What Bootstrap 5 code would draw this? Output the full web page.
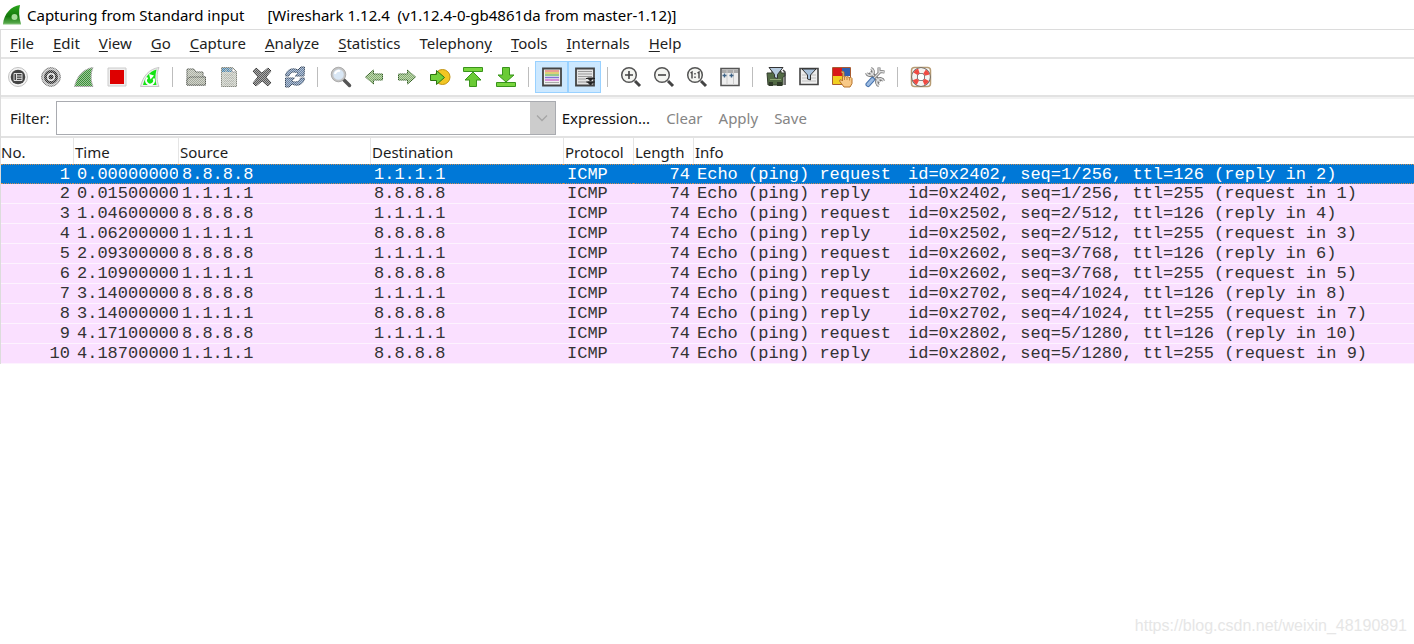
<!DOCTYPE html>
<html lang="en">
<head>
<meta charset="utf-8">
<meta name="viewport" content="width=device-width, initial-scale=1">
<title>Capturing from Standard input</title>
<link href="https://cdn.jsdelivr.net/npm/bootstrap@5.3.0/dist/css/bootstrap.min.css" rel="stylesheet">
<style>
body{font-family:"Noto Sans","Open Sans",sans-serif;font-size:15px;line-height:20px;color:#1c1c1c;background:#fff}
.titlebar{height:29px;padding-left:2px;gap:5px;color:#000;white-space:pre}
.appname{margin-left:18px}
.frame-left{border-left:1px solid #dcdcdc;border-top:1px solid #dcdcdc}
.menubar{height:29px;padding:0 0 2px 9px;gap:19px;border-bottom:2px solid #e4e4e4}
.menubar a{color:#222;text-decoration:none}
.menubar u,.menubar a{text-underline-offset:2px}
.toolbar{height:38px;border-bottom:2px solid #e2e2e2}
.tool{width:33px;height:32px;padding:0;border:1px solid transparent;border-radius:0;line-height:0}
.tool.on{background:#cce8ff;border-color:#99d1ff}
.tool svg{width:22px;height:22px}
.tool:disabled{border-color:transparent;opacity:1}
.tool:disabled svg{-webkit-mask:repeating-conic-gradient(#000 0 25%,rgba(0,0,0,.5) 0 50%) 0 0/2px 2px;mask:repeating-conic-gradient(#000 0 25%,rgba(0,0,0,.5) 0 50%) 0 0/2px 2px}
.divider{width:1px;height:20px;margin:0 6px;background:#bdbdbd}
.filterbar{height:41px;padding-left:9px;border-top:2px solid #f2f2f2;border-bottom:2px solid #e2e2e2}
.combo{width:500px;height:34px;margin:0 6px;border:1px solid #a9abb0}
.combo input{min-width:0;border:0;outline:0;padding:0 6px;background:#fff}
.combo button{width:25px;border:0;background:#ccc;padding:0;line-height:0}
.filterbar .act{padding:0;border:0;margin-right:16px;font-size:15px;line-height:20px;color:#111}
.filterbar .act:disabled{color:#858585;opacity:1;border:0}
.packets{table-layout:fixed;width:100%;border-collapse:separate;border-spacing:0}
.packets th{height:26px;padding:0 0 2px 1px;font-weight:400;line-height:20px;border-left:1px solid #e5e5e5;white-space:nowrap;vertical-align:bottom}
.packets th:first-child{border-left:0;padding-left:0}
.packets td{height:20px;padding:0 0 0 4px;font-family:"Liberation Mono",monospace;font-size:17px;line-height:18px;white-space:pre;overflow:hidden;background:#fae0ff;color:#333;border-bottom:1px solid #fdf3ff}
.packets td.num{text-align:right;padding:0 3px 0 0}
.packets .picked td{background:#0078d7;color:#fff;border-top:1px dotted #c98d55;border-bottom:1px dotted #c98d55;line-height:17px}
.what{display:inline-block;min-width:211px}
.watermark{position:absolute;right:7px;bottom:8px;font-family:"Liberation Sans",sans-serif;font-size:16px;color:#e6e6e6}
</style>
</head>
<body class="position-relative min-vh-100 overflow-hidden">
<header class="titlebar d-flex align-items-center">
<svg width="20" height="20" viewBox="0 0 20 20"><defs><linearGradient id="fin" x1="0" y1="0" x2="0" y2="1"><stop offset="0" stop-color="#2aa51c"/><stop offset=".6" stop-color="#14790c"/><stop offset="1" stop-color="#5fae52"/></linearGradient></defs><path d="M1 19C2 9 9 1 18 0c-1.500 6-1 12 1 19z" fill="url(#fin)"/><circle cx="12.500" cy="12" r="3" fill="#a5dc9a"/><path d="M1 19h18" stroke="#7fbf75"/></svg>
<span>Capturing from Standard input</span><span class="appname">[Wireshark 1.12.4  (v1.12.4-0-gb4861da from master-1.12)]</span>
</header>
<div class="frame-left">
<nav class="menubar d-flex align-items-center" aria-label="Main">
<a href="#"><u>F</u>ile</a><a href="#"><u>E</u>dit</a><a href="#"><u>V</u>iew</a><a href="#"><u>G</u>o</a><a href="#"><u>C</u>apture</a><a href="#"><u>A</u>nalyze</a><a href="#"><u>S</u>tatistics</a><a href="#">Telephon<u>y</u></a><a href="#"><u>T</u>ools</a><a href="#"><u>I</u>nternals</a><a href="#"><u>H</u>elp</a>
</nav>
<div class="toolbar d-flex align-items-center" role="toolbar" aria-label="Tools">
<button class="btn tool" aria-label="Interfaces"><svg viewBox="0 0 22 22"><circle cx="11" cy="11" r="9.500" fill="#f4f4f4" stroke="#c2c2c2"/><circle cx="11" cy="11" r="7.300" fill="#444"/><path d="M7 7.500h8v7H7zM9.500 7.500v7M9.500 10H15M9.500 12.300H15" fill="none" stroke="#ddd"/></svg></button>
<button class="btn tool" aria-label="Options" disabled><svg viewBox="0 0 22 22"><circle cx="11" cy="11" r="9.300" fill="#bdbdbd" stroke="#666"/><circle cx="11" cy="11" r="5.500" fill="#eee" stroke="#333" stroke-width="3"/><circle cx="11" cy="11" r="2.500" fill="#222"/></svg></button>
<button class="btn tool" aria-label="Start" disabled><svg viewBox="0 0 22 22"><path d="M1.500 20.500C4 10 10 3 20 1.500c-2.500 6-2.500 13 0 19z" fill="#3c8f37" stroke="#999"/></svg></button>
<button class="btn tool" aria-label="Stop"><svg viewBox="0 0 22 22"><path d="M2 2h18v18H2z" fill="#eee" stroke="#ccc"/><path d="M4 4h14v14H4z" fill="#de0000"/></svg></button>
<button class="btn tool" aria-label="Restart"><svg viewBox="0 0 22 22"><path d="M1.500 20.500C4 10 10 3 20 1.500c-2.500 6-2.500 13 0 19z" fill="#eee" stroke="#c7c7c7"/><path d="M4 19C6 11 10 6 17.500 3.500c-1.500 6-1.500 10 0 15.500z" fill="#15e415"/><path d="M8.500 11.500a4 4 0 1 0 6 1" fill="none" stroke="#fff" stroke-width="2"/><path d="M10 8l5 1.500-3.500 4z" fill="#fff"/></svg></button>
<span class="divider"></span>
<button class="btn tool" aria-label="Open" disabled><svg viewBox="0 0 22 22"><path d="M2 3h7l2 3h7v5h2.500v8H2z" fill="#adb2a4" stroke="#555850"/><path d="M2 13l3-2h15.500v8H2z" fill="#a5aa9b" stroke="#555850"/></svg></button>
<button class="btn tool" aria-label="Save" disabled><svg viewBox="0 0 22 22"><path d="M3.500 1.500h11l4 4v15h-15z" fill="#c2c5bb" stroke="#85887e"/><path d="M4 2h11v4H4z" fill="#4f86ab"/><path d="M6 9h9M6 12h10M6 15h10M6 18h10M8 3v3M12 2v3" stroke="#a7aaa2"/><path d="M14 2v4h4" fill="#fff" stroke="#888"/></svg></button>
<button class="btn tool" aria-label="Close" disabled><svg viewBox="0 0 22 22"><path d="M2 5l3-3 6 5 6-5 3 3-5 6 5 6-3 3-6-5-6 5-3-3 5-6z" fill="#5a5a5a" stroke="#333"/></svg></button>
<button class="btn tool" aria-label="Reload" disabled><svg viewBox="0 0 22 22"><path d="M1.500 10C2 4 8 1 14 4l3-3 3.500 0-.5 9h-9l3-3C10 5 6 6 5 10zM20.500 12C20 18 14 21 8 18l-3 3H1.500v-9h9l-3 3c4 2 8 1 9-3z" fill="#6c86a8" stroke="#34475f"/></svg></button>
<span class="divider"></span>
<button class="btn tool" aria-label="Find"><svg viewBox="0 0 22 22"><path d="M14 14l5.500 5.500" stroke="#555" stroke-width="3.500" stroke-linecap="round"/><circle cx="8.500" cy="8.500" r="6.300" fill="#d9e7f5" stroke="#c4c4c4" stroke-width="2"/><circle cx="8.500" cy="8.500" r="7.300" fill="none" stroke="#888" stroke-width=".6"/><path d="M5 8a4 4 0 0 1 5-3" fill="none" stroke="#fff" stroke-width="2"/></svg></button>
<button class="btn tool" aria-label="Back" disabled><svg viewBox="0 0 22 22"><path d="M2.500 11l8-7v4h9v6h-9v4z" fill="#85b06e" stroke="#315f20"/></svg></button>
<button class="btn tool" aria-label="Forward" disabled><svg viewBox="0 0 22 22"><path d="M19.500 11l-8-7v4h-9v6h9v4z" fill="#85b06e" stroke="#315f20"/></svg></button>
<button class="btn tool" aria-label="Go to packet"><svg viewBox="0 0 22 22"><circle cx="13.500" cy="11" r="7.500" fill="#f2c623" stroke="#c19312"/><path d="M1.500 8.500h6v-4l8 7-8 7v-4h-6z" fill="#73d13b" stroke="#2c7412"/></svg></button>
<button class="btn tool" aria-label="First packet"><svg viewBox="0 0 22 22"><path d="M1.500 1.500h19v4h-19z" fill="#78d53e" stroke="#39941b"/><path d="M11 6l8 8h-4.500v6.500h-7V14H3z" fill="#6acb35" stroke="#39941b"/></svg></button>
<button class="btn tool" aria-label="Last packet"><svg viewBox="0 0 22 22"><path d="M1.500 16.500h19v4h-19z" fill="#78d53e" stroke="#39941b"/><path d="M11 16l-8-7h4.500V1.500h7V9H19z" fill="#6acb35" stroke="#39941b"/></svg></button>
<span class="divider"></span>
<button class="btn tool on" aria-label="Colorize" aria-pressed="true"><svg viewBox="0 0 22 22"><path d="M2 2.500h18v17H2z" fill="#eee" stroke="#444" stroke-width="1.800"/><path d="M4 5h14" stroke="#e98376" stroke-width="1.500"/><path d="M4 7h14" stroke="#d9c64e" stroke-width="1.500"/><path d="M4 9h14" stroke="#78bd6b" stroke-width="1.500"/><path d="M4 11.500h14" stroke="#7e75d6" stroke-width="1.500"/><path d="M4 14h14" stroke="#cf70cf" stroke-width="1.500"/><path d="M4 16.500h14" stroke="#aaa"/></svg></button>
<button class="btn tool on" aria-label="Auto scroll" aria-pressed="true"><svg viewBox="0 0 22 22"><path d="M2 2.500h18v17H2z" fill="#e4e4e4" stroke="#444" stroke-width="1.800"/><path d="M4 5.500h14M4 8h14M4 10.500h14M4 13h8M4 16h8" stroke="#999"/><path d="M12 12.500h9M13.500 12l3 3 3-3zM12 16h9M13.500 16l3 3 3-3z" fill="#222" stroke="#222"/></svg></button>
<span class="divider"></span>
<button class="btn tool" aria-label="Zoom in"><svg viewBox="0 0 22 22"><path d="M15 15l5 5" stroke="#444" stroke-width="3"/><circle cx="9" cy="9" r="7.300" fill="#f4f5f1" stroke="#555" stroke-width="1.500"/><path d="M5 9h8M9 5v8" stroke="#444" stroke-width="1.600"/></svg></button>
<button class="btn tool" aria-label="Zoom out"><svg viewBox="0 0 22 22"><path d="M15 15l5 5" stroke="#444" stroke-width="3"/><circle cx="9" cy="9" r="7.300" fill="#f4f5f1" stroke="#555" stroke-width="1.500"/><path d="M5 9h8" stroke="#444" stroke-width="1.600"/></svg></button>
<button class="btn tool" aria-label="Normal size"><svg viewBox="0 0 22 22"><path d="M15 15l5 5" stroke="#444" stroke-width="3"/><circle cx="9" cy="9" r="7.300" fill="#f4f5f1" stroke="#555" stroke-width="1.500"/><path d="M4.500 7L6 6v6.500M11.500 7L13 6v6.500M9 7v1.500M9 10.500V12" fill="none" stroke="#444" stroke-width="1.400"/></svg></button>
<button class="btn tool" aria-label="Resize columns"><svg viewBox="0 0 22 22"><path d="M2 2.500h18v17H2z" fill="#eee" stroke="#555" stroke-width="1.600"/><path d="M3 3.500h16v3.500H3z" fill="#aaa"/><path d="M8 4v15M14.500 4v15" stroke="#ccc"/><path d="M3.500 9.500h4M5.500 7.500v4M10.500 9.500h4M12.500 7.500v4" stroke="#3e6386" stroke-width="1.400"/></svg></button>
<span class="divider"></span>
<button class="btn tool" aria-label="Capture filters"><svg viewBox="0 0 22 22"><path d="M2 7h5v-2h9v2h4v3l-2 1v8H3z" fill="#536b45" stroke="#333c2d"/><path d="M4 16h4v4H4zM12 16h5v4h-5z" fill="#2f3a29"/><path d="M4 1.500h14l-5.500 7v4l-3-1v-3z" fill="#b6cbdf" stroke="#333"/><path d="M5 13.500h11" stroke="#91a777"/><path d="M18 4l2 2v13" fill="none" stroke="#444" stroke-width="1.500"/></svg></button>
<button class="btn tool" aria-label="Display filters"><svg viewBox="0 0 22 22"><path d="M2 2.500h18v16H2z" fill="#eee" stroke="#444" stroke-width="1.600"/><path d="M4 9h14M4 12h14M4 15h14" stroke="#c0c0c0"/><path d="M4 3h14l-5.500 6v5l-3-1V9z" fill="#a9c2dc" stroke="#333"/></svg></button>
<button class="btn tool" aria-label="Coloring rules"><svg viewBox="0 0 22 22"><path d="M2 2h9v8H2z" fill="#d91919"/><path d="M11 2h8v8h-8z" fill="#315fae"/><path d="M2 10h9v8H2z" fill="#f1cf21"/><path d="M1.500 1.500h18v17h-18z" fill="none" stroke="#a75b32"/><path d="M10 6q2-1.500 3 0v5q1.500-1 2.500 0 1.500-1 2.500.5 2-1 3 1v5l-2 3.500h-6l-4.500-6q0-2 2-1l1 1V7z" fill="#f8c987" stroke="#b77328"/><path d="M13.500 11v3M16 11.500V14M18.500 12v2.500" stroke="#b77328" stroke-width=".8"/></svg></button>
<button class="btn tool" aria-label="Preferences"><svg viewBox="0 0 22 22"><path d="M6 6l10 10" stroke="#777" stroke-width="4"/><path d="M7 2.500a3.500 3.500 0 1 1-4.500 4.500M15 19.500a3.500 3.500 0 1 1 4.500-4.500" fill="none" stroke="#777" stroke-width="3.200"/><path d="M7 2.500a3.500 3.500 0 1 1-4.500 4.500M15 19.500a3.500 3.500 0 1 1 4.500-4.500M6 6l10 10" fill="none" stroke="#ddd" stroke-width="1.600"/><path d="M16.500 5.500l-7 7M15 1.500v4h2l3.500.5" stroke="#777" stroke-width="3" fill="none"/><path d="M16.500 5.500l-7 7M15 2v3.500h2l3 .5" stroke="#ddd" stroke-width="1.300" fill="none"/><path d="M8.500 13.500l-4.500 5" stroke="#4672ad" stroke-width="5" stroke-linecap="round"/><path d="M8.500 13.500l-4.500 5" stroke="#9dbce2" stroke-width="3" stroke-linecap="round"/></svg></button>
<span class="divider"></span>
<button class="btn tool" aria-label="Help"><svg viewBox="0 0 22 22"><rect x="1.500" y="1.500" width="19" height="19" rx="3" fill="none" stroke="#b79c74" stroke-width="1.500"/><circle cx="11" cy="11" r="6.500" fill="none" stroke="#666" stroke-width="6.500"/><circle cx="11" cy="11" r="6.500" fill="none" stroke="#f5f3f0" stroke-width="4.800"/><circle cx="11" cy="11" r="6.500" fill="none" stroke="#f04a42" stroke-width="4.800" stroke-dasharray="4.200 6.010" stroke-dashoffset="-3"/></svg></button>
</div>
<form class="filterbar d-flex align-items-center" onsubmit="return false">
<label for="filter">Filter:</label>
<div class="combo d-flex"><input id="filter" type="text" class="flex-grow-1"><button type="button" aria-label="Filter history"><svg width="12" height="8" viewBox="0 0 12 8"><path d="M1 1.500l5 5 5-5" fill="none" stroke="#a5a5a5" stroke-width="1.300"/></svg></button></div>
<button type="button" class="btn act">Expression...</button>
<button type="button" class="btn act" disabled>Clear</button>
<button type="button" class="btn act" disabled>Apply</button>
<button type="button" class="btn act" disabled>Save</button>
</form>
<table class="packets">
<colgroup><col style="width:72px"><col style="width:105px"><col style="width:192px"><col style="width:193px"><col style="width:70px"><col style="width:60px"><col></colgroup>
<thead><tr><th>No.</th><th>Time</th><th>Source</th><th>Destination</th><th>Protocol</th><th>Length</th><th>Info</th></tr></thead>
<tbody>
<tr class="picked"><td class="num">1</td><td>0.00000000</td><td>8.8.8.8</td><td>1.1.1.1</td><td>ICMP</td><td class="num">74</td><td><span class="what">Echo (ping) request</span>id=0x2402, seq=1/256, ttl=126 (reply in 2)</td></tr>
<tr><td class="num">2</td><td>0.01500000</td><td>1.1.1.1</td><td>8.8.8.8</td><td>ICMP</td><td class="num">74</td><td><span class="what">Echo (ping) reply</span>id=0x2402, seq=1/256, ttl=255 (request in 1)</td></tr>
<tr><td class="num">3</td><td>1.04600000</td><td>8.8.8.8</td><td>1.1.1.1</td><td>ICMP</td><td class="num">74</td><td><span class="what">Echo (ping) request</span>id=0x2502, seq=2/512, ttl=126 (reply in 4)</td></tr>
<tr><td class="num">4</td><td>1.06200000</td><td>1.1.1.1</td><td>8.8.8.8</td><td>ICMP</td><td class="num">74</td><td><span class="what">Echo (ping) reply</span>id=0x2502, seq=2/512, ttl=255 (request in 3)</td></tr>
<tr><td class="num">5</td><td>2.09300000</td><td>8.8.8.8</td><td>1.1.1.1</td><td>ICMP</td><td class="num">74</td><td><span class="what">Echo (ping) request</span>id=0x2602, seq=3/768, ttl=126 (reply in 6)</td></tr>
<tr><td class="num">6</td><td>2.10900000</td><td>1.1.1.1</td><td>8.8.8.8</td><td>ICMP</td><td class="num">74</td><td><span class="what">Echo (ping) reply</span>id=0x2602, seq=3/768, ttl=255 (request in 5)</td></tr>
<tr><td class="num">7</td><td>3.14000000</td><td>8.8.8.8</td><td>1.1.1.1</td><td>ICMP</td><td class="num">74</td><td><span class="what">Echo (ping) request</span>id=0x2702, seq=4/1024, ttl=126 (reply in 8)</td></tr>
<tr><td class="num">8</td><td>3.14000000</td><td>1.1.1.1</td><td>8.8.8.8</td><td>ICMP</td><td class="num">74</td><td><span class="what">Echo (ping) reply</span>id=0x2702, seq=4/1024, ttl=255 (request in 7)</td></tr>
<tr><td class="num">9</td><td>4.17100000</td><td>8.8.8.8</td><td>1.1.1.1</td><td>ICMP</td><td class="num">74</td><td><span class="what">Echo (ping) request</span>id=0x2802, seq=5/1280, ttl=126 (reply in 10)</td></tr>
<tr><td class="num">10</td><td>4.18700000</td><td>1.1.1.1</td><td>8.8.8.8</td><td>ICMP</td><td class="num">74</td><td><span class="what">Echo (ping) reply</span>id=0x2802, seq=5/1280, ttl=255 (request in 9)</td></tr>
</tbody>
</table>
</div>
<div class="watermark">https://blog.csdn.net/weixin_48190891</div>
<script src="https://cdn.jsdelivr.net/npm/bootstrap@5.3.0/dist/js/bootstrap.bundle.min.js"></script>
</body>
</html>
